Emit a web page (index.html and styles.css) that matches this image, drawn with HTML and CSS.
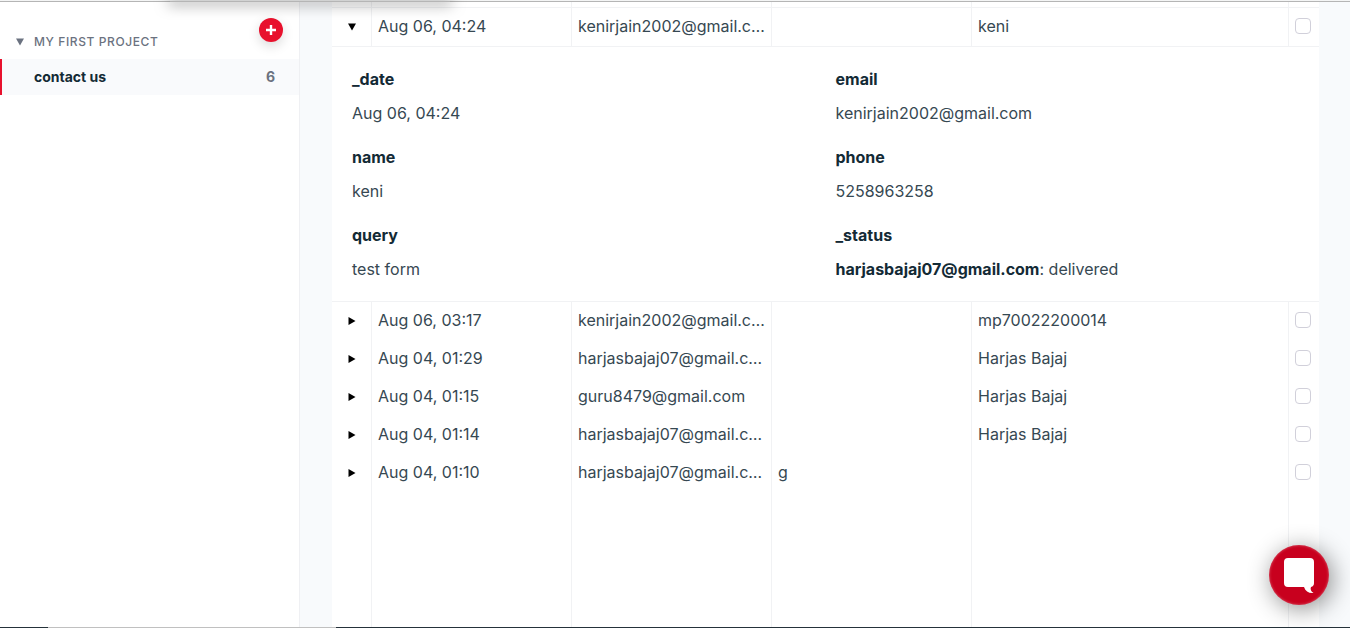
FILE: index.html
```html
<!DOCTYPE html>
<html lang="en">
<head>
    <meta charset="UTF-8">
    <title>contact us</title>
    <link rel="stylesheet" href="styles.css">
</head>
<body>
    <header class="topbar">
        <div class="topbar-shadow"></div>
    </header>
    <div class="layout">
        <nav class="sidebar">
            <div class="project">
                <svg class="project-arrow" width="8" height="8" viewBox="0 0 8 8"><path d="M0 0.5h8L4 7.5z" fill="#6b7280"/></svg>
                <span class="project-name">MY FIRST PROJECT</span>
                <button type="button" class="add" aria-label="Add form">
                    <svg width="12" height="12" viewBox="0 0 12 12"><path d="M6 1v10M1 6h10" stroke="#fff" stroke-width="2.4"/></svg>
                </button>
            </div>
            <a href="#" class="form-link">
                <span>contact us</span>
                <span class="count">6</span>
            </a>
        </nav>
        <main class="main">
            <table class="submissions">
                <colgroup>
                    <col class="col-toggle">
                    <col class="col-data">
                    <col class="col-data">
                    <col class="col-data">
                    <col>
                    <col class="col-check">
                </colgroup>
                <tbody>
                    <tr class="strip"><td></td><td></td><td></td><td></td><td></td><td></td></tr>
                    <tr class="open">
                        <td class="center"><button type="button" class="toggle" aria-label="Collapse"><svg width="8" height="8" viewBox="0 0 8 8"><path d="M0 0.5h8L4 7.5z"/></svg></button></td>
                        <td>Aug 06, 04:24</td>
                        <td>kenirjain2002@gmail.com</td>
                        <td></td>
                        <td>keni</td>
                        <td><input type="checkbox" aria-label="Select row"></td>
                    </tr>
                    <tr class="detail">
                        <td colspan="6">
                            <dl class="fields">
                                <div class="field"><dt>_date</dt><dd>Aug 06, 04:24</dd></div>
                                <div class="field"><dt>email</dt><dd>kenirjain2002@gmail.com</dd></div>
                                <div class="field"><dt>name</dt><dd>keni</dd></div>
                                <div class="field"><dt>phone</dt><dd>5258963258</dd></div>
                                <div class="field"><dt>query</dt><dd>test form</dd></div>
                                <div class="field"><dt>_status</dt><dd><b>harjasbajaj07@gmail.com</b>: delivered</dd></div>
                            </dl>
                        </td>
                    </tr>
                    <tr>
                        <td class="center"><button type="button" class="toggle" aria-label="Expand"><svg width="8" height="8" viewBox="0 0 8 8"><path d="M0.5 0v8L7.5 4z"/></svg></button></td>
                        <td>Aug 06, 03:17</td>
                        <td>kenirjain2002@gmail.com</td>
                        <td></td>
                        <td>mp70022200014</td>
                        <td><input type="checkbox" aria-label="Select row"></td>
                    </tr>
                    <tr>
                        <td class="center"><button type="button" class="toggle" aria-label="Expand"><svg width="8" height="8" viewBox="0 0 8 8"><path d="M0.5 0v8L7.5 4z"/></svg></button></td>
                        <td>Aug 04, 01:29</td>
                        <td>harjasbajaj07@gmail.com</td>
                        <td></td>
                        <td>Harjas Bajaj</td>
                        <td><input type="checkbox" aria-label="Select row"></td>
                    </tr>
                    <tr>
                        <td class="center"><button type="button" class="toggle" aria-label="Expand"><svg width="8" height="8" viewBox="0 0 8 8"><path d="M0.5 0v8L7.5 4z"/></svg></button></td>
                        <td>Aug 04, 01:15</td>
                        <td>guru8479@gmail.com</td>
                        <td></td>
                        <td>Harjas Bajaj</td>
                        <td><input type="checkbox" aria-label="Select row"></td>
                    </tr>
                    <tr>
                        <td class="center"><button type="button" class="toggle" aria-label="Expand"><svg width="8" height="8" viewBox="0 0 8 8"><path d="M0.5 0v8L7.5 4z"/></svg></button></td>
                        <td>Aug 04, 01:14</td>
                        <td>harjasbajaj07@gmail.com</td>
                        <td></td>
                        <td>Harjas Bajaj</td>
                        <td><input type="checkbox" aria-label="Select row"></td>
                    </tr>
                    <tr>
                        <td class="center"><button type="button" class="toggle" aria-label="Expand"><svg width="8" height="8" viewBox="0 0 8 8"><path d="M0.5 0v8L7.5 4z"/></svg></button></td>
                        <td>Aug 04, 01:10</td>
                        <td>harjasbajaj07@gmail.com</td>
                        <td>g</td>
                        <td></td>
                        <td><input type="checkbox" aria-label="Select row"></td>
                    </tr>
                    <!-- empty row takes the rest of the height -->
                    <tr class="filler"><td></td><td></td><td></td><td></td><td></td><td></td></tr>
                </tbody>
            </table>
        </main>
    </div>
    <footer class="bottombar"><div class="bottombar-light"></div></footer>
    <button type="button" class="chat" aria-label="Open chat">
        <svg width="32" height="38" viewBox="0 0 32 38"><path d="M5 2h22a4 4 0 0 1 4 4v21a4 4 0 0 1-3 4c-1 2 0 4.500 2.500 6-4.500 0.500-8-1.500-9.500-6H5a4 4 0 0 1-4-4V6a4 4 0 0 1 4-4z" fill="#fff"/></svg>
    </button>
</body>
</html>
```
FILE: styles.css
```css
* {
    box-sizing: border-box;
}
body {
    margin: 0;
    height: 100vh;
    display: flex;
    flex-direction: column;
    overflow: hidden;
    background-color: #fff;
    color: #364852;
    font-family: Inter, sans-serif;
    font-size: 16px;
    line-height: 24px;
}
button {
    border: 0;
    padding: 0;
    cursor: pointer;
}
svg {
    display: block;
}
.topbar {
    position: relative;
    height: 2px;
    background-color: #f4f5f5;
    border-bottom: 1px solid #b5b5b5;
}
/* shadow of the panel above the bar */
.topbar-shadow {
    position: absolute;
    bottom: -1px;
    left: 170px;
    width: 280px;
    height: 1px;
    box-shadow: 0 0 14px 2px rgba(0, 0, 0, 0.5);
}
.layout {
    flex: 1;
    min-height: 0;
    display: flex;
}
.sidebar {
    width: 300px;
    flex-shrink: 0;
    border-right: 1px solid #eff0f3;
}
.project {
    display: flex;
    align-items: flex-end;
    height: 57px;
    padding: 0 16px;
    color: #6b7280;
}
.project-arrow {
    margin-bottom: 13px;
}
.project-name {
    flex: 1;
    margin: 0 0 5px 10px;
    font-size: 12px;
    font-weight: 500;
    letter-spacing: 0.05em;
}
.add {
    display: flex;
    align-items: center;
    justify-content: center;
    width: 24px;
    height: 24px;
    margin-bottom: 17px;
    border-radius: 50%;
    background-color: #e8112d;
    box-shadow: 0 4px 12px rgba(0, 0, 0, 0.15);
}
.form-link {
    display: flex;
    align-items: center;
    justify-content: space-between;
    height: 36px;
    padding: 0 24px 0 32px;
    border-left: 2px solid #e8112d;
    background-color: #f9fafc;
    color: #132a35;
    font-size: 14px;
    font-weight: 700;
    text-decoration: none;
}
.count {
    color: #6b7280;
}
.main {
    flex: 1;
    min-width: 0;
    padding: 0 31px 0 32px;
    background-color: #f8fafc;
}
.submissions {
    width: 100%;
    height: 100%;
    table-layout: fixed;
    border-spacing: 0;
    background-color: #fff;
}
.col-toggle {
    width: 40px;
}
.col-data {
    width: 200px;
}
.col-check {
    width: 30px;
}
.submissions td {
    height: 38px;
    padding: 6px 6px 8px;
    border-right: 1px solid #f1f2f4;
    overflow: hidden;
    text-overflow: ellipsis;
    white-space: nowrap;
}
.submissions td:last-child {
    border-right: 0;
}
.submissions .center {
    padding: 7px 6px;
}
.submissions .strip td {
    height: 6px;
    padding: 0;
    border-bottom: 1px solid #f1f2f4;
}
.submissions .open td {
    height: 39px;
    border-bottom: 1px solid #f1f2f4;
}
.submissions .detail td {
    padding: 20px;
    border-bottom: 1px solid #f1f2f4;
}
.submissions .filler td {
    height: auto;
    padding: 0;
}
.toggle {
    display: block;
    margin: 0 auto;
    background: none;
}
input[type="checkbox"] {
    appearance: none;
    display: block;
    width: 16px;
    height: 16px;
    margin: 0;
    border: 1px solid #d1d0da;
    border-radius: 4px;
    background-color: #fff;
}
.fields {
    display: grid;
    grid-template-columns: 1fr 1fr;
    gap: 20px;
    margin: 0;
}
.field dt {
    margin-bottom: 10px;
    color: #132a35;
    font-weight: 700;
}
.field dd {
    margin: 0;
}
.field b {
    color: #132a35;
    font-weight: 700;
}
.bottombar {
    height: 1px;
    padding-left: 48px;
    background-color: #25323a;
}
.bottombar-light {
    width: 288px;
    height: 1px;
    background-color: #c0c0c0;
}
.chat {
    position: fixed;
    right: 21px;
    bottom: 23px;
    display: flex;
    align-items: center;
    justify-content: center;
    width: 60px;
    height: 60px;
    border-radius: 50%;
    background-color: #c8001e;
    box-shadow: 3px 4px 24px rgba(0, 0, 0, 0.45), inset 0 0 3px rgba(255, 255, 255, 0.4);
}
```
